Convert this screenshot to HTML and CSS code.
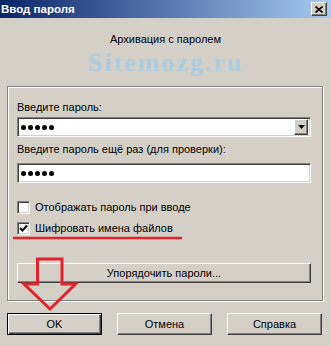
FILE: index.html
```html
<!DOCTYPE html>
<html lang="ru">
<head>
<meta charset="utf-8">
<title>Ввод пароля</title>
<link rel="stylesheet" href="styles.css">
</head>
<body>
<div class="window">
  <div class="titlebar">
    <span class="title">Ввод пароля</span>
    <span class="close raised"><svg width="8" height="7" viewBox="0 0 8 7"><path d="M0.5 0.5 L7.5 6.5 M7.5 0.5 L0.5 6.5" stroke="#000" stroke-width="1.6"/></svg></span>
  </div>
  <div class="heading">Архивация с паролем</div>
  <div class="watermark">Sitemozg.ru</div>
  <div class="group">
    <div class="label">Введите пароль:</div>
    <div class="field combo">
      <span class="dots"><i></i><i></i><i></i><i></i><i></i></span>
      <span class="drop raised"><svg width="7" height="4" viewBox="0 0 7 4"><polygon points="0,0 7,0 3.5,4" fill="#000"/></svg></span>
    </div>
    <div class="label l2">Введите пароль ещё раз (для проверки):</div>
    <div class="field f2">
      <span class="dots"><i></i><i></i><i></i><i></i><i></i></span>
    </div>
    <div class="check c1"><span class="box"></span><span>Отображать пароль при вводе</span></div>
    <div class="check c2"><span class="box"><svg width="11" height="11" viewBox="0 0 11 11"><polyline points="2,5 4.5,7.5 9,2.5" fill="none" stroke="#000" stroke-width="2"/></svg></span><span>Шифровать имена файлов</span></div>
    <div class="btn raised wide">Упорядочить пароли...</div>
  </div>
  <div class="buttons">
    <div class="btn default">OK</div>
    <div class="btn raised">Отмена</div>
    <div class="btn raised">Справка</div>
  </div>
  <svg class="annot" width="331" height="346" viewBox="0 0 331 346">
    <line x1="13" y1="238" x2="182" y2="238" stroke="#e3222b" stroke-width="2.5"/>
    <polygon points="37.5,259 62,259 62,284 75.5,284 50,309 24,284 37.5,284" fill="none" stroke="#e3222b" stroke-width="3"/>
  </svg>
</div>
</body>
</html>
```
FILE: styles.css
```css
html, body {
  margin: 0;
  padding: 0;
}
body {
  background: #d4d0c8;
  font-family: "Liberation Sans", Arial, sans-serif;
  font-size: 11px;
  color: #000;
}
.window {
  position: relative;
  width: 331px;
  height: 346px;
  overflow: hidden;
  background: #d4d0c8;
}
.raised {
  box-sizing: border-box;
  background: #d4d0c8;
  border: 1px solid;
  border-color: #fff #404040 #404040 #fff;
  box-shadow: inset -1px -1px 0 #808080, inset 1px 1px 0 #d4d0c8;
}
.titlebar {
  height: 18px;
  display: flex;
  align-items: center;
  justify-content: space-between;
  background: linear-gradient(to right, #0a246a, #a6caf0);
}
.title {
  color: #fff;
  font-weight: bold;
  font-size: 11.5px;
  line-height: 18px;
  padding-left: 1px;
}
.close {
  width: 16px;
  height: 14px;
  margin-right: 4px;
  display: flex;
  align-items: center;
  justify-content: center;
}
.heading {
  margin-top: 15px;
  line-height: 13px;
  text-align: center;
}
.watermark {
  margin-top: 4px;
  text-align: center;
  font-family: "Liberation Serif", serif;
  font-weight: bold;
  font-size: 26px;
  line-height: 26px;
  letter-spacing: 2px;
  color: #abcde0;
}
.group {
  margin: 10px 8px 0 7px;
  border: 1px solid #808080;
  box-shadow: inset 1px 1px 0 #fff, 1px 1px 0 #fff;
  padding: 14px 11px 17px 9px;
  display: flex;
  flex-direction: column;
}
.label {
  line-height: 13px;
}
.l2 {
  margin-top: 6px;
}
.field {
  box-sizing: border-box;
  height: 20px;
  margin-top: 3px;
  background: #fff;
  border: 1px solid;
  border-color: #808080 #fff #fff #808080;
  box-shadow: inset 1px 1px 0 #404040, inset -1px -1px 0 #d4d0c8;
  display: flex;
  align-items: center;
  padding: 0 2px 0 3px;
}
.f2 {
  margin-top: 7px;
}
.dots {
  display: flex;
  gap: 2px;
}
.dots i {
  display: block;
  width: 5px;
  height: 5px;
  border-radius: 50%;
  background: #000;
}
.drop {
  margin-left: auto;
  width: 14px;
  height: 16px;
  display: flex;
  align-items: center;
  justify-content: center;
}
.check {
  display: flex;
  align-items: center;
  gap: 5px;
  height: 13px;
  line-height: 13px;
}
.c1 {
  margin-top: 18px;
}
.c2 {
  margin-top: 8px;
}
.box {
  box-sizing: border-box;
  width: 13px;
  height: 13px;
  background: #fff;
  border: 1px solid;
  border-color: #808080 #fff #fff #808080;
  box-shadow: inset 1px 1px 0 #404040, inset -1px -1px 0 #d4d0c8;
  display: flex;
  align-items: center;
  justify-content: center;
}
.box svg {
  display: block;
}
.btn {
  display: flex;
  align-items: center;
  justify-content: center;
  line-height: 13px;
}
.wide {
  margin-top: 28px;
  height: 20px;
}
.buttons {
  display: flex;
  justify-content: space-between;
  margin: 12px 9px 0 7px;
}
.buttons .btn {
  width: 95px;
  height: 22px;
}
.default {
  box-sizing: border-box;
  background: #d4d0c8;
  border: 1px solid #000;
  box-shadow: inset 1px 1px 0 #fff, inset -1px -1px 0 #404040, inset -2px -2px 0 #808080;
}
.annot {
  position: absolute;
  left: 0;
  top: 0;
  pointer-events: none;
}
```
